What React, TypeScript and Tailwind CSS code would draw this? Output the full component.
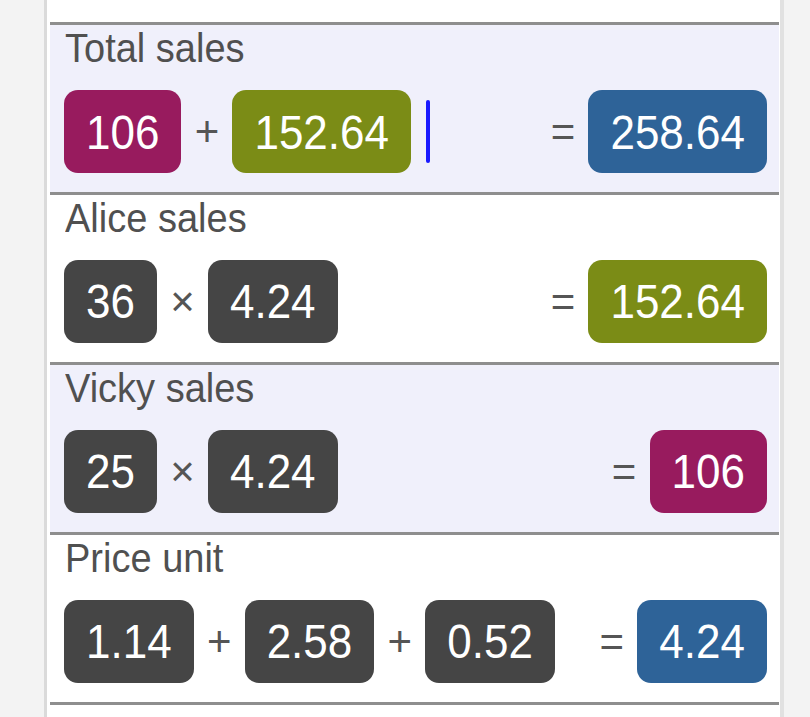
import React from 'react';

type Pill = { value: string; color: string };
type Row = {
  title: string;
  bg: string;
  terms: Pill[];
  op: string;
  result: Pill;
  cursor?: boolean;
};

const PURPLE = 'bg-[#981b5e]';
const GREEN = 'bg-[#7b8c16]';
const BLUE = 'bg-[#2e6398]';
const DARK = 'bg-[#454545]';

const rows: Row[] = [
  {
    title: 'Total sales',
    bg: 'bg-[#f0f0fb]',
    terms: [
      { value: '106', color: PURPLE },
      { value: '152.64', color: GREEN },
    ],
    op: '+',
    result: { value: '258.64', color: BLUE },
    cursor: true,
  },
  {
    title: 'Alice sales',
    bg: 'bg-white',
    terms: [
      { value: '36', color: DARK },
      { value: '4.24', color: DARK },
    ],
    op: '×',
    result: { value: '152.64', color: GREEN },
  },
  {
    title: 'Vicky sales',
    bg: 'bg-[#f0f0fb]',
    terms: [
      { value: '25', color: DARK },
      { value: '4.24', color: DARK },
    ],
    op: '×',
    result: { value: '106', color: PURPLE },
  },
  {
    title: 'Price unit',
    bg: 'bg-white',
    terms: [
      { value: '1.14', color: DARK },
      { value: '2.58', color: DARK },
      { value: '0.52', color: DARK },
    ],
    op: '+',
    result: { value: '4.24', color: BLUE },
  },
];

function Value({ pill }: { pill: Pill }) {
  return (
    <div
      className={`${pill.color} h-[83px] px-[22px] rounded-[14px] flex items-center text-white text-[44px] leading-none`}
    >
      <span className="inline-block scale-y-[1.1]">{pill.value}</span>
    </div>
  );
}

function Operator({ sign }: { sign: string }) {
  return (
    <span className="w-[51px] shrink-0 text-center text-[42px] leading-none text-[#555555]">
      {sign}
    </span>
  );
}

export default function App() {
  return (
    <div
      className="w-[810px] h-[717px] overflow-hidden bg-[#f3f3f3]"
      style={{ fontFamily: '"Liberation Sans", Arial, sans-serif' }}
    >
      <div className="ml-[44px] w-[740px] h-full bg-white border-l-[3px] border-l-[#dadada] border-r-[4px] border-r-[#e1e1e1] pl-[3px] pr-[1px]">
        <div className="h-[22px]" />

        {rows.map((row) => (
          <section
            key={row.title}
            className={`${row.bg} border-t-[3px] border-[#8e8e8e] h-[170px] pl-[14px] pr-[12px] pt-[2px]`}
          >
            <h2 className="pl-[1px] text-[38px] leading-[38px] text-[#505050] font-normal">
              <span className="inline-block origin-top scale-y-[1.08]">{row.title}</span>
            </h2>
            <div className="mt-[25px] flex items-center">
              {row.terms.map((term, i) => (
                <React.Fragment key={i}>
                  {i > 0 && <Operator sign={row.op} />}
                  <Value pill={term} />
                </React.Fragment>
              ))}
              {row.cursor && (
                <div className="ml-[15px] w-[4px] h-[63px] rounded-full bg-[#1a1aff]" />
              )}
              <div className="flex-1" />
              <Operator sign="=" />
              <Value pill={row.result} />
            </div>
          </section>
        ))}

        <div className="border-t-[3px] border-[#8e8e8e]" />
      </div>
    </div>
  );
}
